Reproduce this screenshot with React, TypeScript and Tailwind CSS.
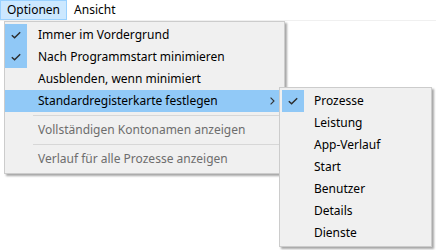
import React from "react";

const Check = () => (
  <svg width="10" height="8" viewBox="0 0 10 8" fill="none">
    <path d="M0.8 4.2 L3.6 6.8 L9.2 1.2" stroke="#2b2b2b" strokeWidth="1.4" />
  </svg>
);

const Chevron = () => (
  <svg width="5" height="8" viewBox="0 0 5 8" fill="none">
    <path d="M0.6 0.6 L4 4 L0.6 7.4" stroke="#333" strokeWidth="1.1" />
  </svg>
);

type Item = { label: string; checked?: boolean; active?: boolean; disabled?: boolean; sub?: boolean };

const mainItems: (Item | "sep")[] = [
  { label: "Immer im Vordergrund", checked: true },
  { label: "Nach Programmstart minimieren", checked: true },
  { label: "Ausblenden, wenn minimiert" },
  { label: "Standardregisterkarte festlegen", active: true, sub: true },
  "sep",
  { label: "Vollständigen Kontonamen anzeigen", disabled: true },
  "sep",
  { label: "Verlauf für alle Prozesse anzeigen", disabled: true },
];

const subItems: Item[] = [
  { label: "Prozesse", checked: true },
  { label: "Leistung" },
  { label: "App-Verlauf" },
  { label: "Start" },
  { label: "Benutzer" },
  { label: "Details" },
  { label: "Dienste" },
];

export default function App() {
  return (
    <div
      className="relative w-[436px] h-[250px] bg-white overflow-hidden text-[12px] text-black"
      style={{ fontFamily: '"Segoe UI", "Noto Sans", "Open Sans", sans-serif' }}
    >
      {/* menu bar */}
      <div className="flex h-[21px] bg-white border-b border-[#f0f0f0]">
        <div className="flex items-center h-[20px] px-[6px] bg-[#cce8ff] border border-[#99d1ff]">Optionen</div>
        <div className="flex items-center h-[20px] px-[7px]">Ansicht</div>
      </div>

      {/* main menu */}
      <div className="absolute left-[4px] top-[21px] w-[281px] bg-[#f0f0f0] border border-[#cccccc] pt-[2px] pb-[3px] shadow-[2px_2px_2px_0px_rgba(0,0,0,0.35)]">
        {mainItems.map((it, i) =>
          it === "sep" ? (
            <div key={i} className="h-[7px] flex items-center pl-[28px] pr-[1px]">
              <div className="h-px w-full bg-[#d7d7d7]" />
            </div>
          ) : (
            <div
              key={i}
              className={`flex items-center h-[22px] mr-[1px] ${it.active ? "bg-[#91c9f7]" : ""} ${
                it.disabled ? "text-[#6d6d6d]" : "text-black"
              }`}
            >
              <div
                className={`w-[22px] h-[22px] flex items-center justify-center ${it.checked ? "bg-[#90c8f6]" : ""}`}
              >
                {it.checked ? <Check /> : null}
              </div>
              <span className="ml-[11px] flex-1 leading-none whitespace-nowrap">{it.label}</span>
              {it.sub ? (
                <span className="mr-[8px] flex items-center">
                  <Chevron />
                </span>
              ) : null}
            </div>
          )
        )}
      </div>

      {/* submenu */}
      <div className="absolute left-[279px] top-[87px] w-[153px] bg-[#f0f0f0] border border-[#cccccc] py-[2px] pl-[2px] shadow-[2px_2px_2px_0px_rgba(0,0,0,0.35)]">
        {subItems.map((it, i) => (
          <div key={i} className="flex items-center h-[22px]">
            <div
              className={`w-[22px] h-[22px] flex items-center justify-center ${it.checked ? "bg-[#90c8f6]" : ""}`}
            >
              {it.checked ? <Check /> : null}
            </div>
            <span className="ml-[10px] leading-none whitespace-nowrap">{it.label}</span>
          </div>
        ))}
      </div>
    </div>
  );
}
